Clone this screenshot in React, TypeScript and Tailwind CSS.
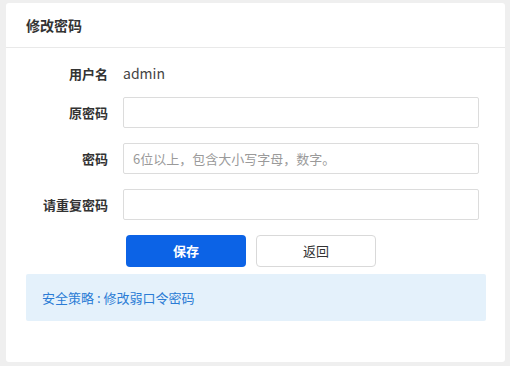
import React from 'react';

const font = { fontFamily: '"Noto Sans CJK SC", "Noto Sans", sans-serif' };

const Field: React.FC<{ label: string; placeholder?: string }> = ({ label, placeholder }) => (
    <div className="flex items-center h-[31px]">
        <label className="w-[102px] text-right text-[13px] font-bold text-[#333]">{label}</label>
        <input
            type="password"
            placeholder={placeholder}
            className="ml-[15px] w-[356px] h-[31px] border border-[#dcdcdc] rounded-[2px] bg-white px-[9px] text-[13px] text-[#333] placeholder:text-[#9a9a9a] outline-none"
        />
    </div>
);

export default function App() {
    return (
        <div className="w-[510px] h-[366px] bg-[#efefef] pt-[3px] pl-[6px] pr-[5px] pb-[4px]" style={font}>
            <div className="h-full bg-white rounded-[3px] flex flex-col">
                {/* Header */}
                <div className="h-[45px] border-b border-[#e9e9e9] flex items-center px-[20px]">
                    <h3 className="text-[14px] font-bold text-[#333]">修改密码</h3>
                </div>

                {/* Form */}
                <div className="flex flex-col pt-[10px]">
                    <div className="flex items-center h-[31px]">
                        <span className="w-[102px] text-right text-[13px] font-bold text-[#333]">用户名</span>
                        <span className="ml-[15px] text-[14px] text-[#444]">admin</span>
                    </div>
                    <div className="flex flex-col gap-[15px] mt-[8px]">
                        <Field label="原密码" />
                        <Field label="密码" placeholder="6位以上，包含大小写字母，数字。" />
                        <Field label="请重复密码" />
                    </div>

                    {/* Actions */}
                    <div className="flex gap-[10px] mt-[15px] pl-[120px]">
                        <button className="w-[120px] h-[32px] rounded-[4px] bg-[#0c63e6] text-white text-[13px] font-bold">
                            保存
                        </button>
                        <button className="w-[120px] h-[32px] rounded-[4px] bg-white border border-[#d9d9d9] text-[#333] text-[13px]">
                            返回
                        </button>
                    </div>

                    {/* Notice */}
                    <div className="ml-[20px] mr-[19px] mt-[7px] h-[47px] bg-[#e4f1fb] rounded-[2px] flex items-center px-[16px]">
                        <span className="text-[13px] text-[#2b7cd5]">安全策略 : 修改弱口令密码</span>
                    </div>
                </div>
            </div>
        </div>
    );
}
